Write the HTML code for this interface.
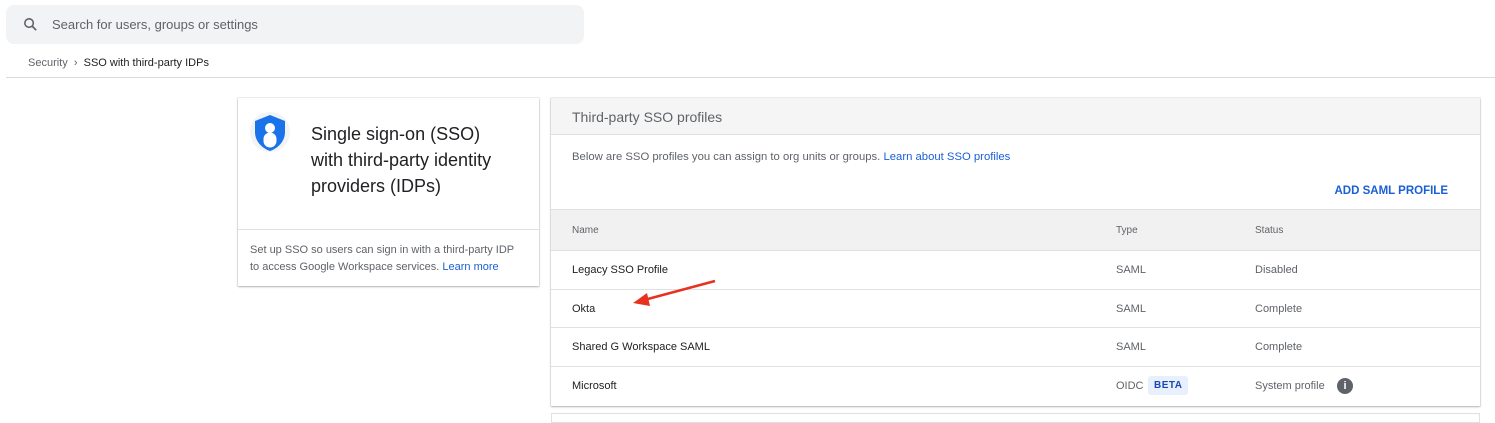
<!DOCTYPE html>
<html><head><style>
*{box-sizing:border-box;margin:0;padding:0}
body{width:1495px;height:416px;overflow:hidden;background:#fff;font-family:"Liberation Sans",sans-serif;position:relative}
.abs{position:absolute}
.search{left:6px;top:5px;width:578px;height:39px;background:#f1f3f4;border-radius:8px}
.card{background:#fff;box-shadow:0 1px 2px rgba(0,0,0,.25),0 0 0 1px rgba(0,0,0,.06)}
.row{position:absolute;left:0;right:0;height:39px;border-top:1px solid #e0e0e0;font-size:11px;color:#202124}
.row span{position:absolute;top:13px}
.c1{left:21px}.c2{left:565px;color:#5f6368}.c3{left:704px;color:#5f6368}
</style></head><body>
<div class="abs search">
<svg class="abs" style="left:16px;top:11px" width="17" height="17" viewBox="0 0 24 24"><circle cx="10" cy="10" r="6" fill="none" stroke="#5f6368" stroke-width="2.2"/><path d="M14.5 14.5L20 20" stroke="#5f6368" stroke-width="2.4"/></svg>
<div class="abs" style="left:46px;top:12px;font-size:13px;color:#5f6368">Search for users, groups or settings</div>
</div>
<div class="abs" style="left:28px;top:57px;font-size:11px;color:#5f6368">Security &nbsp;›&nbsp; <span style="color:#202124">SSO with third-party IDPs</span></div>
<div class="abs" style="left:6px;top:77px;width:1489px;height:1px;background:#dadce0"></div>

<div class="abs card" style="left:238px;top:98px;width:301px;height:188px">
<div class="abs" style="left:12px;top:14px;width:40px;height:40px;border-radius:50%;background:#f1f3f4"></div>
<svg class="abs" style="left:15px;top:16px" width="34" height="38" viewBox="0 0 34 38"><path d="M17 1L32 7v11c0 9-6.5 16-15 19C8.5 34 2 27 2 18V7z" fill="#1a73e8"/><circle cx="17" cy="14" r="5" fill="#fff"/><path d="M10.5 25a6.5 6.5 0 0 1 13 0v2a6.5 6.5 0 0 1-13 0z" fill="#fff"/></svg>
<div class="abs" style="left:73px;top:23px;font-size:18px;line-height:26px;color:#202124">Single sign-on (SSO)<br>with third-party identity<br>providers (IDPs)</div>
<div class="abs" style="left:0;right:0;top:131px;height:1px;background:#e0e0e0"></div>
<div class="abs" style="left:12px;top:144px;font-size:11px;line-height:17px;color:#5f6368">Set up SSO so users can sign in with a third-party IDP<br>to access Google Workspace services. <span style="color:#1a5fd6">Learn more</span></div>
</div>

<div class="abs card" style="left:551px;top:98px;width:929px;height:308px">
<div class="abs" style="left:0;right:0;top:0;height:37px;background:#f5f5f5;border-bottom:1px solid #e0e0e0"></div>
<div class="abs" style="left:21px;top:11px;font-size:14px;color:#5f6368">Third-party SSO profiles</div>
<div class="abs" style="left:21px;top:53px;font-size:11.3px;color:#5f6368">Below are SSO profiles you can assign to org units or groups. <span style="color:#1a5fd6">Learn about SSO profiles</span></div>
<div class="abs" style="right:32px;top:87px;font-size:11.5px;font-weight:bold;color:#1a5fd6">ADD SAML PROFILE</div>
<div class="abs" style="left:0;right:0;top:111px;height:41px;background:#f1f1f1;border-top:1px solid #e0e0e0;font-size:10px;color:#5f6368">
<span class="abs" style="left:21px;top:15px">Name</span><span class="abs" style="left:565px;top:15px">Type</span><span class="abs" style="left:704px;top:15px">Status</span></div>
<div class="row" style="top:152px"><span class="c1">Legacy SSO Profile</span><span class="c2">SAML</span><span class="c3">Disabled</span></div>
<div class="row" style="top:191px"><span class="c1">Okta</span><span class="c2">SAML</span><span class="c3">Complete</span></div>
<div class="row" style="top:229px"><span class="c1">Shared G Workspace SAML</span><span class="c2">SAML</span><span class="c3">Complete</span></div>
<div class="row" style="top:268px"><span class="c1">Microsoft</span><span class="c2">OIDC</span>
<span style="left:597px;top:9px;background:#e8f0fe;color:#1a47b8;font-weight:bold;font-size:10px;padding:4px 6px;border-radius:3px;letter-spacing:.5px">BETA</span>
<span class="c3">System profile</span>
<span style="left:786px;top:11px;width:16px;height:16px;border-radius:50%;background:#5f6368;color:#fff;font-size:11px;font-weight:bold;text-align:center;line-height:16px">i</span></div>
</div>
<div class="abs" style="left:551px;top:413px;width:929px;height:10px;border:1px solid #e0e0e0"></div>

<svg class="abs" style="left:0;top:0" width="1495" height="416"><path d="M715 281L644 300" stroke="#e8321e" stroke-width="2.5"/><path d="M633 303L647 293L650 306z" fill="#e8321e"/></svg>
</body></html>
